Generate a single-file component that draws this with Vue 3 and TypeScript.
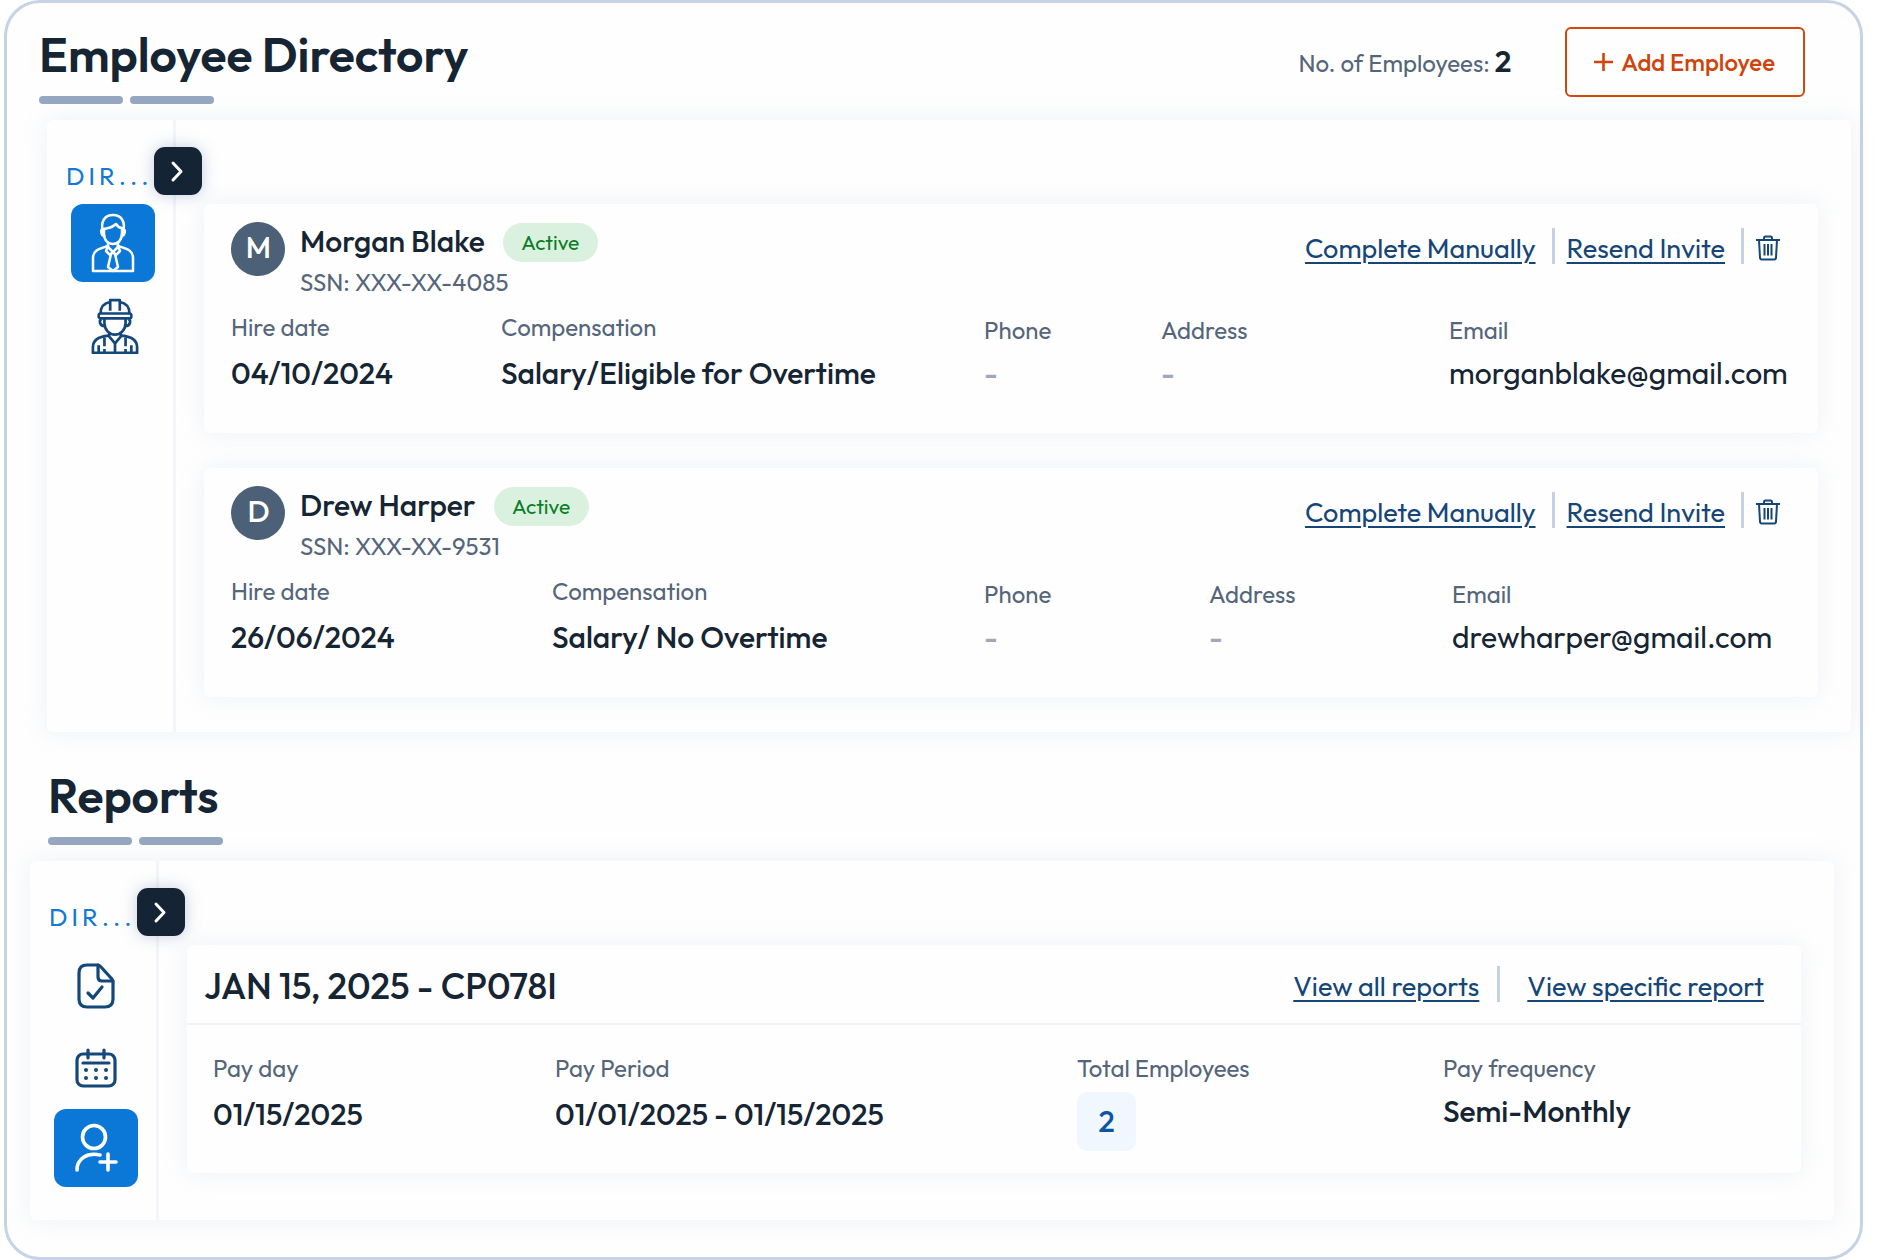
<script setup lang="ts">
interface Employee {
  name: string
  initial: string
  ssn: string
  hireDate: string
  compensation: string
  phone: string
  address: string
  email: string
  layout: string
}

const employees: Employee[] = [
  {
    name: 'Morgan Blake',
    initial: 'M',
    ssn: 'XXX-XX-4085',
    hireDate: '04/10/2024',
    compensation: 'Salary/Eligible for Overtime',
    phone: '-',
    address: '-',
    email: 'morganblake@gmail.com',
    layout: 'fields--wide',
  },
  {
    name: 'Drew Harper',
    initial: 'D',
    ssn: 'XXX-XX-9531',
    hireDate: '26/06/2024',
    compensation: 'Salary/ No Overtime',
    phone: '-',
    address: '-',
    email: 'drewharper@gmail.com',
    layout: 'fields--even',
  },
]
</script>

<template>
  <main class="frame">
    <header class="header">
      <div>
        <h1 class="title">Employee Directory</h1>
        <div class="bars"><span></span><span></span></div>
      </div>
      <div class="header-side">
        <p class="count">No. of Employees: <strong>{{ employees.length }}</strong></p>
        <button class="add" type="button">
          <svg width="19" height="20" viewBox="0 0 19 20" aria-hidden="true">
            <path d="M9.500 1v18M0 10h19" stroke="currentColor" stroke-width="2.600" />
          </svg>
          Add Employee
        </button>
      </div>
    </header>

    <section class="panel">
      <nav class="sidebar" aria-label="Employee directory">
        <p class="sidebar-label">DIR...</p>
        <button class="toggle" type="button" aria-label="Expand menu">
          <svg width="16" height="24" viewBox="0 0 16 24" aria-hidden="true">
            <path d="M3 4l8 8.500-8 8.500" />
          </svg>
        </button>
        <button class="item item--active" type="button" aria-label="Employees">
          <svg width="44" height="62" viewBox="0 0 44 62" aria-hidden="true">
            <g fill="none" stroke="currentColor" stroke-width="2.500" stroke-linejoin="round" stroke-linecap="round">
              <path d="M12 21C9 9 14 3 22 3s13 6 10 18" />
              <path d="M13 17c4-1 8-1 12-5 2 3 4 4 6 4v5c0 7-4 11-9 11s-9-4-9-10z" />
              <path d="M12 17c-3 1-2 6 1 7M32 17c3 1 2 6-1 7" />
              <path d="M17 31v4l5 5 5-5v-4" />
              <path d="M17 34C8 37 2 38 2 46v13h40V46c0-8-6-9-15-12" />
              <path d="M17 34l-2 5 4 4 3-3 3 3 4-4-2-5" />
              <path d="M20 42l-3 13 5 4 5-4-3-13" />
            </g>
          </svg>
        </button>
        <button class="item" type="button" aria-label="Contractors">
          <svg width="48" height="56" viewBox="0 0 50 58" aria-hidden="true">
            <g fill="none" stroke="currentColor" stroke-width="2.800" stroke-linejoin="round">
              <path d="M10 16C10 9 14 5 20 4M40 16C40 9 36 5 30 4" />
              <path d="M20 13V2h10v11" />
              <rect x="8" y="16" width="34" height="5" rx="2" />
              <path d="M14 21v5c0 7 5 12 11 12s11-5 11-12v-5" />
              <path d="M11 22c-3 1-2 7 3 7M39 22c3 1 2 7-3 7" />
              <path d="M19 36v4l6 7 6-7v-4" />
              <path d="M18 39C8 40 2 44 2 51v6h46v-6c0-7-6-11-16-12" />
              <path d="M25 47v10M14 41v9M14 53v4M36 41v9M36 53v4M8 49v8M42 49v8" />
            </g>
          </svg>
        </button>
      </nav>

      <div class="content">
        <article v-for="employee in employees" :key="employee.ssn" class="card">
          <div class="card-head">
            <span class="avatar" aria-hidden="true">{{ employee.initial }}</span>
            <div class="identity">
              <div class="name-row">
                <h2 class="name">{{ employee.name }}</h2>
                <span class="badge">Active</span>
              </div>
              <p class="ssn">SSN: {{ employee.ssn }}</p>
            </div>
            <div class="actions">
              <a href="#complete">Complete Manually</a>
              <span class="divider"></span>
              <a href="#resend">Resend Invite</a>
              <span class="divider"></span>
              <button class="trash" type="button" aria-label="Delete employee">
                <svg width="24" height="26" viewBox="0 0 24 26" aria-hidden="true">
                  <path
                    d="M0 5h24M8 5V3q0-1.500 1.500-1.500h5Q16 1.500 16 3v2M3 5l1 17.500q0 2 2 2h12q2 0 2-2L21 5M8.500 9v11.500M12 9v11.500M15.500 9v11.500"
                    fill="none"
                    stroke="currentColor"
                    stroke-width="2"
                  />
                </svg>
              </button>
            </div>
          </div>
          <dl class="fields" :class="employee.layout">
            <div class="field">
              <dt>Hire date</dt>
              <dd>{{ employee.hireDate }}</dd>
            </div>
            <div class="field">
              <dt>Compensation</dt>
              <dd>{{ employee.compensation }}</dd>
            </div>
            <div class="field field--contact">
              <dt>Phone</dt>
              <dd class="empty">{{ employee.phone }}</dd>
            </div>
            <div class="field field--contact">
              <dt>Address</dt>
              <dd class="empty">{{ employee.address }}</dd>
            </div>
            <div class="field field--contact">
              <dt>Email</dt>
              <dd>{{ employee.email }}</dd>
            </div>
          </dl>
        </article>
      </div>
    </section>

    <header class="header header--reports">
      <div>
        <h1 class="title">Reports</h1>
        <div class="bars"><span></span><span></span></div>
      </div>
    </header>

    <section class="panel panel--reports">
      <nav class="sidebar" aria-label="Reports">
        <p class="sidebar-label">DIR...</p>
        <button class="toggle" type="button" aria-label="Expand menu">
          <svg width="16" height="24" viewBox="0 0 16 24" aria-hidden="true">
            <path d="M3 4l8 8.500-8 8.500" />
          </svg>
        </button>
        <button class="item" type="button" aria-label="Documents">
          <svg width="38" height="46" viewBox="0 0 38 46" aria-hidden="true">
            <g fill="none" stroke="currentColor" stroke-width="3.200" stroke-linecap="round" stroke-linejoin="round">
              <path d="M21 2H10Q2 2 2 10v26q0 8 8 8h18q8 0 8-8V19q0-2-2-4L24 4q-1.500-2-3-2z" />
              <path d="M21 2v12q0 4 4 4h11" />
              <path d="M11 30l5 5 9-11" />
            </g>
          </svg>
        </button>
        <button class="item" type="button" aria-label="Calendar">
          <svg width="42" height="40" viewBox="0 0 42 40" aria-hidden="true">
            <g fill="none" stroke="currentColor" stroke-width="3.200" stroke-linecap="round">
              <rect x="2" y="6" width="38" height="32" rx="6" />
              <path d="M13 2v8M29 2v8M8 15h26" />
            </g>
            <g fill="currentColor">
              <circle cx="11" cy="22" r="2" />
              <circle cx="21" cy="22" r="2" />
              <circle cx="31" cy="22" r="2" />
              <circle cx="11" cy="30" r="2" />
              <circle cx="21" cy="30" r="2" />
              <circle cx="31" cy="30" r="2" />
            </g>
          </svg>
        </button>
        <button class="item item--active" type="button" aria-label="Add person">
          <svg width="44" height="50" viewBox="0 0 44 50" aria-hidden="true">
            <g fill="none" stroke="currentColor" stroke-width="3.600" stroke-linecap="round">
              <circle cx="20" cy="14" r="11.500" />
              <path d="M3 47c0-11 10-18 23-15M26 39h16M34 31v16" />
            </g>
          </svg>
        </button>
      </nav>

      <div class="content">
        <article class="card card--report">
          <div class="report-head">
            <h2 class="report-title">JAN 15, 2025 - CP078I</h2>
            <div class="actions actions--report">
              <a href="#all">View all reports</a>
              <span class="divider"></span>
              <a href="#specific">View specific report</a>
            </div>
          </div>
          <dl class="fields fields--report">
            <div class="field">
              <dt>Pay day</dt>
              <dd>01/15/2025</dd>
            </div>
            <div class="field">
              <dt>Pay Period</dt>
              <dd>01/01/2025 - 01/15/2025</dd>
            </div>
            <div class="field field--compact">
              <dt>Total Employees</dt>
              <dd><span class="total">2</span></dd>
            </div>
            <div class="field field--compact">
              <dt>Pay frequency</dt>
              <dd>Semi-Monthly</dd>
            </div>
          </dl>
        </article>
      </div>
    </section>
  </main>
</template>

<style>
body {
  margin: 0;
  background: #fff;
}
</style>

<style scoped>
* {
  box-sizing: border-box;
}

h1,
h2,
p,
dl,
dd {
  margin: 0;
}

button {
  padding: 0;
  border: 0;
  background: none;
  font: inherit;
  cursor: pointer;
}

svg {
  display: block;
  flex: none;
}

.frame {
  min-height: 100vh;
  margin: 0 14px 0 4px;
  padding: 24px 0 37px;
  border: 3px solid #c6d3e4;
  border-radius: 36px;
  background: #fefefe;
  color: #162533;
  font-family: Outfit, Lato, sans-serif;
  font-size: 24px;
}

.header {
  display: flex;
  justify-content: space-between;
  align-items: flex-start;
  padding: 0 55px 0 32px;
}

.header--reports {
  margin-top: 36px;
  padding-left: 41px;
}

.title {
  font-size: 48px;
  font-weight: 600;
  line-height: 54px;
}

.bars {
  display: flex;
  gap: 7px;
  margin-top: 15px;
}

.bars span {
  width: 84px;
  height: 8px;
  border-radius: 4px;
  background: #94a6c0;
}

.header-side {
  display: flex;
  align-items: center;
  gap: 54px;
}

.count {
  color: #55657a;
  line-height: 36px;
}

.count strong {
  color: #162533;
  font-size: 30px;
  font-weight: 600;
}

.add {
  display: flex;
  align-items: center;
  gap: 8px;
  height: 70px;
  padding: 0 28px 0 27px;
  border: 2px solid #d0480c;
  border-radius: 6px;
  color: #d0430a;
  font-weight: 500;
}

.panel {
  display: flex;
  margin: 16px 9px 0 40px;
  border-radius: 6px;
  background: #fefefe;
  box-shadow: 0 0 24px rgba(150, 170, 200, 0.16);
}

.panel--reports {
  margin: 16px 26px 0 23px;
}

.sidebar {
  position: relative;
  display: flex;
  flex: none;
  flex-direction: column;
  align-items: center;
  width: 129px;
  padding: 42px 0 0 5px;
  border-right: 3px solid #f3f5f9;
}

.sidebar-label {
  align-self: flex-start;
  margin: 0 0 14px 14px;
  color: #1479d6;
  font-size: 25px;
  letter-spacing: 4px;
  line-height: 28px;
}

.toggle {
  position: absolute;
  top: 27px;
  right: -29px;
  display: flex;
  align-items: center;
  justify-content: center;
  width: 48px;
  height: 48px;
  border-radius: 11px;
  background: #142434;
  box-shadow: 0 0 16px rgba(90, 120, 170, 0.35);
}

.toggle path {
  fill: none;
  stroke: #fff;
  stroke-width: 3;
  stroke-linecap: round;
  stroke-linejoin: round;
}

.item {
  display: flex;
  align-items: center;
  justify-content: center;
  width: 84px;
  height: 82px;
  color: #14477a;
}

.item--active {
  height: 78px;
  border-radius: 12px;
  background: #0b78d8;
  color: #fff;
}

.item--active + .item {
  margin: 3px 0 0 4px;
}

.content {
  display: flex;
  flex: 1;
  flex-direction: column;
  gap: 35px;
  min-width: 0;
  padding: 84px 33px 35px 28px;
}

.panel--reports .content {
  padding-bottom: 47px;
}

.card {
  padding: 18px 27px 41px;
  border-radius: 6px;
  background: #fefefe;
  box-shadow: 0 0 24px rgba(150, 170, 200, 0.16);
}

.card--report {
  padding: 0;
}

.card-head {
  display: flex;
  align-items: flex-start;
  gap: 15px;
}

.avatar {
  display: flex;
  align-items: center;
  justify-content: center;
  width: 54px;
  height: 54px;
  padding: 0 0 4px 1px;
  border-radius: 50%;
  background: #4c6077;
  color: #fff;
  font-size: 30px;
  font-weight: 500;
}

.identity {
  flex: 1;
}

.name-row {
  display: flex;
  gap: 18px;
  height: 38px;
}

.name {
  font-size: 30px;
  font-weight: 500;
  line-height: 38px;
}

.badge {
  width: 95px;
  height: 39px;
  margin-top: 1px;
  border-radius: 20px;
  background: #dbf1df;
  color: #0a7d26;
  font-size: 21px;
  line-height: 39px;
  text-align: center;
}

.ssn {
  margin-top: 6px;
  color: #55657a;
  line-height: 32px;
}

.actions {
  display: flex;
  align-items: flex-start;
  margin: 6px 11px 0 0;
}

.actions a {
  color: #164677;
  font-size: 27px;
  line-height: 40px;
  text-decoration-thickness: 2px;
  text-underline-offset: 4px;
}

.divider {
  width: 3px;
  height: 36px;
  margin: 0 12px 0 16px;
  background: #c8d1e2;
}

.trash {
  align-self: center;
  color: #164677;
}

.fields {
  display: grid;
  margin-top: 15px;
}

.fields--wide {
  grid-template-columns: 270fr 483fr 177fr 288fr 342fr;
}

.fields--even {
  grid-template-columns: 321fr 432fr 225fr 243fr 339fr;
}

.field {
  min-width: 0;
  white-space: nowrap;
}

.field dt {
  margin-bottom: 13px;
  color: #55657a;
  line-height: 28px;
}

.field dd {
  font-size: 30px;
  font-weight: 500;
  line-height: 38px;
}

.field--contact dt {
  margin-bottom: 7px;
  line-height: 34px;
}

.field--contact dd {
  font-weight: 400;
}

.field--contact .empty {
  color: #a2a7bb;
  font-weight: 500;
}

.report-head {
  display: flex;
  align-items: center;
  justify-content: space-between;
  height: 80px;
  padding: 0 37px 0 17px;
  border-bottom: 2px solid #f1f4f6;
}

.report-title {
  margin-top: 4px;
  font-size: 36px;
  font-weight: 500;
  line-height: 44px;
}

.actions--report {
  margin: 4px 0 0;
}

.actions--report .divider {
  margin: 0 27px 0 18px;
}

.fields--report {
  grid-template-columns: 342fr 522fr 366fr 331fr;
  margin: 0;
  padding: 29px 27px 22px 26px;
}

.field--compact dt {
  margin-bottom: 10px;
}

.total {
  display: block;
  width: 59px;
  border-radius: 10px;
  background: #f0f7ff;
  color: #0f55a5;
  line-height: 59px;
  text-align: center;
}
</style>
